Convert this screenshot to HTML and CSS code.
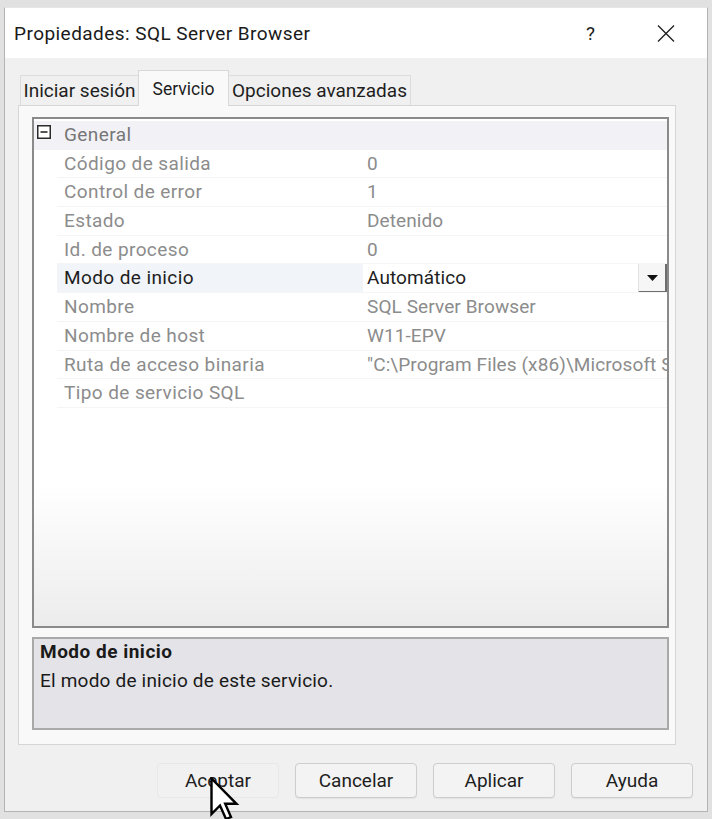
FILE: index.html
```html
<!DOCTYPE html>
<html lang="es">
<head>
<meta charset="utf-8">
<title>Propiedades: SQL Server Browser</title>
<link rel="stylesheet" href="styles.css">
</head>
<body>
<div class="dialog">
  <div class="titlebar">
    <span class="title">Propiedades: SQL Server Browser</span>
    <span class="help">?</span>
    <span class="close"><svg width="18" height="17" viewBox="0 0 18 17"><path d="M1 0.5 L17 16.5 M17 0.5 L1 16.5" stroke="#1e1e1e" stroke-width="1.3" fill="none"/></svg></span>
  </div>
  <div class="content">
    <div class="tabs">
      <div class="tab tab-login">Iniciar sesión</div>
      <div class="tab tab-service active">Servicio</div>
      <div class="tab tab-advanced">Opciones avanzadas</div>
    </div>
    <div class="panel">
      <div class="grid">
        <div class="row cat">
          <span class="margin"><svg class="exp" width="14" height="14" viewBox="0 0 14 14"><rect x="0.75" y="0.75" width="12.5" height="12.5" fill="#fff" stroke="#2b2b2b" stroke-width="1.5"/><path d="M3.5 7 H10.5" stroke="#2b2b2b" stroke-width="1.6"/></svg></span>
          <span class="name">General</span>
          <span class="value"></span>
        </div>
        <div class="row"><span class="margin"></span><span class="name">Código de salida</span><span class="value">0</span></div>
        <div class="row"><span class="margin"></span><span class="name">Control de error</span><span class="value">1</span></div>
        <div class="row"><span class="margin"></span><span class="name">Estado</span><span class="value">Detenido</span></div>
        <div class="row"><span class="margin"></span><span class="name">Id. de proceso</span><span class="value">0</span></div>
        <div class="row editable selected"><span class="margin"></span><span class="name">Modo de inicio</span><span class="value"><span class="val-text">Automático</span><span class="dd"><svg width="11" height="6" viewBox="0 0 11 6"><path d="M0 0 H11 L5.5 6 Z" fill="#111"/></svg></span></span></div>
        <div class="row"><span class="margin"></span><span class="name">Nombre</span><span class="value">SQL Server Browser</span></div>
        <div class="row"><span class="margin"></span><span class="name">Nombre de host</span><span class="value">W11-EPV</span></div>
        <div class="row"><span class="margin"></span><span class="name">Ruta de acceso binaria</span><span class="value">"C:\Program Files (x86)\Microsoft SQL Server\90\Shared\sqlbrowser.exe"</span></div>
        <div class="row"><span class="margin"></span><span class="name">Tipo de servicio SQL</span><span class="value"></span></div>
      </div>
      <div class="desc">
        <div class="desc-title">Modo de inicio</div>
        <div class="desc-text">El modo de inicio de este servicio.</div>
      </div>
    </div>
    <div class="buttons">
      <button class="btn btn-default">Aceptar</button>
      <button class="btn">Cancelar</button>
      <button class="btn">Aplicar</button>
      <button class="btn">Ayuda</button>
    </div>
  </div>
  <svg class="cursor" width="30" height="46" viewBox="0 0 30 46"><path d="M1.5 1.5 V37 L10 28.5 L16 42 L21 40 L15.2 26.8 H26.5 Z" fill="#fff" stroke="#000" stroke-width="2.4" stroke-linejoin="miter"/></svg>
</div>
</body>
</html>
```
FILE: styles.css
```css
* { box-sizing: border-box; }
html, body { margin: 0; padding: 0; }
body {
  width: 712px;
  height: 819px;
  overflow: hidden;
  background: #e1e1e1;
  font-family: Roboto, "Noto Sans", "DejaVu Sans", sans-serif;
  font-size: 19px;
  color: #1e1e1e;
}
.dialog {
  position: relative;
  margin: 7px 0 0 4px;
  width: 704px;
  height: 805px;
  background: #f0f0f0;
  border: 1px solid #b4b4b4;
  border-top-color: #e6e6e6;
  display: flex;
  flex-direction: column;
}
.titlebar {
  height: 50px;
  background: #fff;
  display: flex;
  align-items: center;
  padding-left: 9px;
  padding-top: 1px;
}
.title { flex: 1; color: #1a1a1a; letter-spacing: 0.45px; }
.help { margin-right: 62px; color: #1a1a1a; }
.close { margin-right: 32px; display: flex; }
.content {
  flex: 1;
  padding: 12px 14px 0 13px;
  display: flex;
  flex-direction: column;
}
.tabs {
  display: flex;
  align-items: flex-end;
  height: 36px;
  margin-left: 2px;
  margin-bottom: -1px;
  position: relative;
  z-index: 1;
}
.tab {
  height: 30px;
  margin-bottom: 1px;
  line-height: 29px;
  text-align: center;
  background: #f0f0f0;
  border: 1px solid #dcdcdc;
  border-bottom: none;
  color: #1e1e1e;
  white-space: nowrap;
}
.tab-login { width: 118px; border-right: none; }
.tab-service { width: 91px; }
.tab-advanced { width: 182px; border-left: none; }
.tab.active {
  height: 36px;
  margin-bottom: 0;
  padding-top: 4px;
  line-height: 29px;
  font-size: 17.5px;
  background: #f9f9f9;
  border-color: #d8d8d8;
}
.panel {
  width: 658px;
  height: 640px;
  background: #f9f9f9;
  border: 1px solid #d6d6d6;
  padding: 11px 6px 14px 13px;
  display: flex;
  flex-direction: column;
  gap: 9px;
}
.grid {
  height: 511px;
  flex: none;
  border: 2px solid #8a8a8a;
  background: linear-gradient(#ffffff 0%, #ffffff 72%, #ececec 100%);
  padding-top: 2px;
  overflow: hidden;
}
.row {
  display: grid;
  grid-template-columns: 23px 306px 304px;
  height: 28.7px;
  line-height: 28.7px;
  color: #8c8c8c;
  letter-spacing: 0.4px;
  white-space: nowrap;
}
.row .margin { display: flex; justify-content: flex-start; }
.row .name { padding-left: 7px; border-bottom: 1px solid #f5f5f5; overflow: hidden; }
.row .value { padding-left: 4px; border-bottom: 1px solid #f5f5f5; overflow: hidden; text-overflow: clip; display: flex; letter-spacing: 0.1px; }
.row.cat { background: #f2f2f6; color: #767676; }
.row.cat .name, .row.cat .value { border-bottom: none; }
.exp { margin: 4px 0 0 3px; }
.row.editable { color: #1e1e1e; }
.row.selected .name { background: #f1f4f9; }
.val-text { flex: 1; }
.dd {
  width: 29px;
  height: 30px;
  margin-top: -1px;
  display: flex;
  align-items: center;
  justify-content: center;
  background: #f6f6f6;
  border-top: 1px solid #ffffff;
  border-left: 1px solid #e2e2e2;
  border-right: 2px solid #6e6e6e;
  border-bottom: 2px solid #6e6e6e;
}
.desc {
  height: 93px;
  flex: none;
  border: 2px solid #a9a9a9;
  background: #e4e3e7;
  padding: 0 6px;
  line-height: 29px;
  color: #1a1a1a;
  letter-spacing: 0.2px;
}
.desc-title { font-weight: bold; margin-top: -2px; letter-spacing: 0.5px; }
.buttons {
  display: flex;
  justify-content: flex-end;
  gap: 16px;
  margin-top: 18px;
}
.btn {
  width: 122px;
  height: 35px;
  padding: 0;
  font-family: inherit;
  font-size: 19px;
  color: #1e1e1e;
  background: #f3f3f3;
  border: 1px solid #cdcdcd;
  border-radius: 4px;
  box-shadow: 0 1px 1px rgba(0,0,0,0.06);
}
.btn-default { border-color: #e8e8e8; background: #f1f1f1; box-shadow: none; }
.cursor {
  position: absolute;
  left: 205px;
  top: 769px;
}
```
